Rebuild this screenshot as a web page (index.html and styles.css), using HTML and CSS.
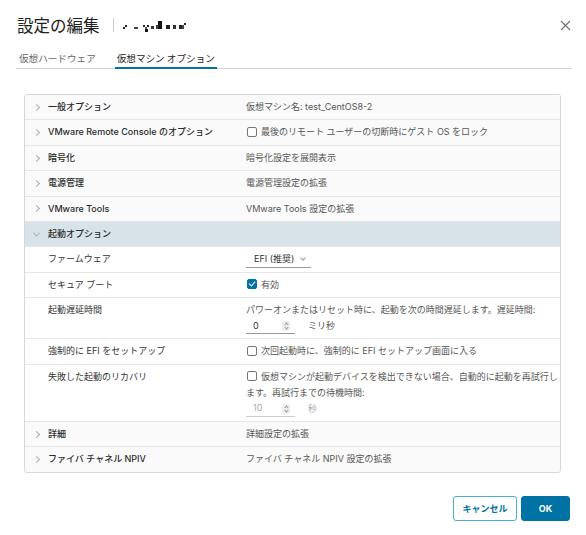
FILE: index.html
```html
<!DOCTYPE html>
<html lang="ja">
<head>
    <meta charset="UTF-8">
    <title>設定の編集</title>
    <link rel="stylesheet" href="styles.css">
</head>
<body>
    <div class="dialog">
        <div class="header">
            <h1 class="title">設定の編集</h1>
            <span class="divider"></span>
            <svg class="redacted" width="76" height="12" viewBox="0 0 76 12">
                <rect x="0" y="7" width="2" height="2" fill="#222"/>
                <rect x="2" y="5" width="2" height="2" fill="#222"/>
                <rect x="11" y="7" width="4" height="2" fill="#444"/>
                <rect x="20" y="5" width="2" height="2" fill="#222"/>
                <rect x="22" y="7" width="2" height="2" fill="#555"/>
                <rect x="24" y="5" width="2" height="2" fill="#222"/>
                <rect x="22" y="9" width="3" height="3" fill="#111"/>
                <rect x="28" y="6" width="3" height="3" fill="#333"/>
                <rect x="35" y="1" width="4" height="8" fill="#111"/>
                <rect x="33" y="5" width="2" height="4" fill="#444"/>
                <rect x="43" y="5" width="4" height="4" fill="#222"/>
                <rect x="50" y="5" width="3" height="4" fill="#333"/>
                <rect x="56" y="5" width="4" height="4" fill="#222"/>
                <rect x="61" y="3" width="2" height="2" fill="#222"/>
                <rect x="59" y="5" width="2" height="4" fill="#444"/>
            </svg>
            <svg class="close" width="11" height="11" viewBox="0 0 11 11">
                <path d="M1 1 L10 10 M10 1 L1 10" stroke="#777" stroke-width="1.2" fill="none"/>
            </svg>
        </div>

        <div class="tabs">
            <div class="tab">仮想ハードウェア</div>
            <div class="tab active">仮想マシン オプション</div>
        </div>

        <div class="panel">
            <div class="row group">
                <div class="label"><span class="chev"></span>一般オプション</div>
                <div class="value">仮想マシン名: test_CentOS8-2</div>
            </div>
            <div class="row group">
                <div class="label"><span class="chev"></span>VMware Remote Console のオプション</div>
                <div class="value"><span class="check"></span>最後のリモート ユーザーの切断時にゲスト OS をロック</div>
            </div>
            <div class="row group">
                <div class="label"><span class="chev"></span>暗号化</div>
                <div class="value">暗号化設定を展開表示</div>
            </div>
            <div class="row group">
                <div class="label"><span class="chev"></span>電源管理</div>
                <div class="value">電源管理設定の拡張</div>
            </div>
            <div class="row group">
                <div class="label"><span class="chev"></span>VMware Tools</div>
                <div class="value">VMware Tools 設定の拡張</div>
            </div>
            <div class="row group open">
                <div class="label"><span class="chev down"></span>起動オプション</div>
                <div class="value"></div>
            </div>
            <div class="row sub">
                <div class="label">ファームウェア</div>
                <div class="value">
                    <span class="select">EFI (推奨)<span class="caret"></span></span>
                </div>
            </div>
            <div class="row sub">
                <div class="label">セキュア ブート</div>
                <div class="value"><span class="check on"></span>有効</div>
            </div>
            <div class="row sub">
                <div class="label">起動遅延時間</div>
                <div class="value">
                    <div>パワーオンまたはリセット時に、起動を次の時間遅延します。遅延時間:</div>
                    <div class="num-line">
                        <span class="num">0<span class="spin"></span></span>
                        <span class="unit">ミリ秒</span>
                    </div>
                </div>
            </div>
            <div class="row sub">
                <div class="label">強制的に EFI をセットアップ</div>
                <div class="value"><span class="check"></span>次回起動時に、強制的に EFI セットアップ画面に入る</div>
            </div>
            <div class="row sub">
                <div class="label">失敗した起動のリカバリ</div>
                <div class="value">
                    <div><span class="check"></span>仮想マシンが起動デバイスを検出できない場合、自動的に起動を再試行します。再試行までの待機時間:</div>
                    <div class="num-line disabled">
                        <span class="num">10<span class="spin"></span></span>
                        <span class="unit">秒</span>
                    </div>
                </div>
            </div>
            <div class="row group">
                <div class="label"><span class="chev"></span>詳細</div>
                <div class="value">詳細設定の拡張</div>
            </div>
            <div class="row group last">
                <div class="label"><span class="chev"></span>ファイバ チャネル NPIV</div>
                <div class="value">ファイバ チャネル NPIV 設定の拡張</div>
            </div>
        </div>

        <div class="footer">
            <button class="btn outline">キャンセル</button>
            <button class="btn primary">OK</button>
        </div>
    </div>
</body>
</html>
```

FILE: styles.css
```css
body {
    margin: 0;
    background-color: #fff;
    font-family: Inter, "Noto Sans CJK JP", sans-serif;
    color: #333;
}
.dialog {
    padding: 0 16px;
}
.header {
    display: flex;
    align-items: center;
    padding-top: 14px;
    height: 22px;
}
.title {
    margin: 0 0 0 1px;
    font-family: "Noto Sans CJK JP", sans-serif;
    font-size: 16.5px;
    font-weight: normal;
    line-height: 22px;
    color: #222;
}
.divider {
    width: 1px;
    height: 14px;
    background-color: #ccc;
    margin: 0 9px 0 13px;
}
.redacted {
    margin-top: 1px;
}
.close {
    margin-left: auto;
    margin-right: -1px;
}
.tabs {
    display: flex;
    gap: 17px;
    margin-top: 14px;
    margin-right: -2px;
    border-bottom: 1px solid #d4d4d4;
}
.tab {
    font-family: "Noto Sans CJK JP", sans-serif;
    font-size: 9.6px;
    line-height: 16px;
    padding: 0 2px 1px;
    margin-bottom: -1px;
    color: #666;
    border-bottom: 2px solid transparent;
}
.tab:first-child {
    margin-left: 1px;
}
.tab.active {
    color: #222;
    border-bottom-color: #0072a3;
}
.panel {
    margin: 25px 9px 0 8px;
    border: 1px solid #d7d7d7;
    border-radius: 3px;
    overflow: hidden;
}
.row {
    display: grid;
    grid-template-columns: 221px 1fr;
    font-size: 9px;
    line-height: 16.4px;
    padding: 4px 0;
    border-bottom: 1px solid #e6e6e6;
}
.row.last {
    border-bottom: none;
}
.row.group {
    background-color: #fafafa;
}
.row.group .label {
    color: #2b2b2b;
    font-weight: 500;
}
.row.group.open {
    background-color: #d8e3e9;
}
.row.sub {
    background-color: #fff;
}
.label {
    display: flex;
    align-items: center;
    align-self: start;
    height: 16.4px;
    padding-left: 9px;
    color: #333;
}
.row.sub .label {
    padding-left: 23px;
}
.value {
    color: #565656;
}
.chev {
    width: 4px;
    height: 4px;
    border-right: 1px solid #aaa;
    border-bottom: 1px solid #aaa;
    transform: rotate(-45deg);
    margin-right: 9px;
    margin-left: 0;
}
.chev.down {
    transform: rotate(45deg) translate(-1px, -1px);
}
.check {
    display: inline-block;
    box-sizing: border-box;
    width: 10px;
    height: 10px;
    border: 1px solid #777;
    border-radius: 2px;
    vertical-align: middle;
    margin: -2px 4px 0 1px;
    position: relative;
    background-color: #fff;
}
.check.on {
    background-color: #0072a3;
    border-color: #0072a3;
}
.check.on::after {
    content: "";
    position: absolute;
    left: 2px;
    top: 0px;
    width: 3px;
    height: 5px;
    border-right: 1.5px solid #fff;
    border-bottom: 1.5px solid #fff;
    transform: rotate(40deg);
}
.select {
    display: inline-flex;
    align-items: center;
    box-sizing: border-box;
    vertical-align: top;
    height: 16.4px;
    color: #333;
    padding: 0 6px 0 8px;
    border-bottom: 1px solid #999;
    width: 65px;
}
.caret {
    width: 3px;
    height: 3px;
    border-right: 1px solid #999;
    border-bottom: 1px solid #999;
    transform: rotate(45deg);
    margin-left: auto;
    margin-top: -3px;
}
.num-line {
    display: flex;
    align-items: center;
    height: 15.5px;
}
.num {
    display: inline-flex;
    align-items: center;
    box-sizing: border-box;
    width: 49px;
    height: 15.5px;
    padding: 0 5px 0 7px;
    border-bottom: 1px solid #999;
    color: #333;
}
.spin {
    margin-left: auto;
    width: 8px;
    height: 10px;
    border-radius: 2px;
    background-color: #eee;
    position: relative;
}
.spin::before,
.spin::after {
    content: "";
    position: absolute;
    left: 2.5px;
    width: 2px;
    height: 2px;
    border-left: 1px solid #999;
    border-top: 1px solid #999;
}
.spin::before {
    top: 2px;
    transform: rotate(45deg);
}
.spin::after {
    bottom: 2px;
    transform: rotate(-135deg);
}
.unit {
    margin-left: 13px;
}
.num-line.disabled .num,
.num-line.disabled .unit {
    color: #aaa;
    border-bottom-color: #ccc;
}
.footer {
    display: flex;
    justify-content: flex-end;
    gap: 4px;
    margin-top: 23px;
}
.btn {
    font-family: Inter, "Noto Sans CJK JP", sans-serif;
    font-size: 9px;
    font-weight: 600;
    height: 25px;
    border-radius: 3px;
    padding: 0;
    cursor: pointer;
}
.btn.outline {
    width: 64px;
    color: #0072a3;
    background-color: #fff;
    border: 1px solid #49afd9;
}
.btn.primary {
    width: 49px;
    color: #fff;
    background-color: #0072a3;
    border: 1px solid #0072a3;
    font-weight: 700;
}
```
